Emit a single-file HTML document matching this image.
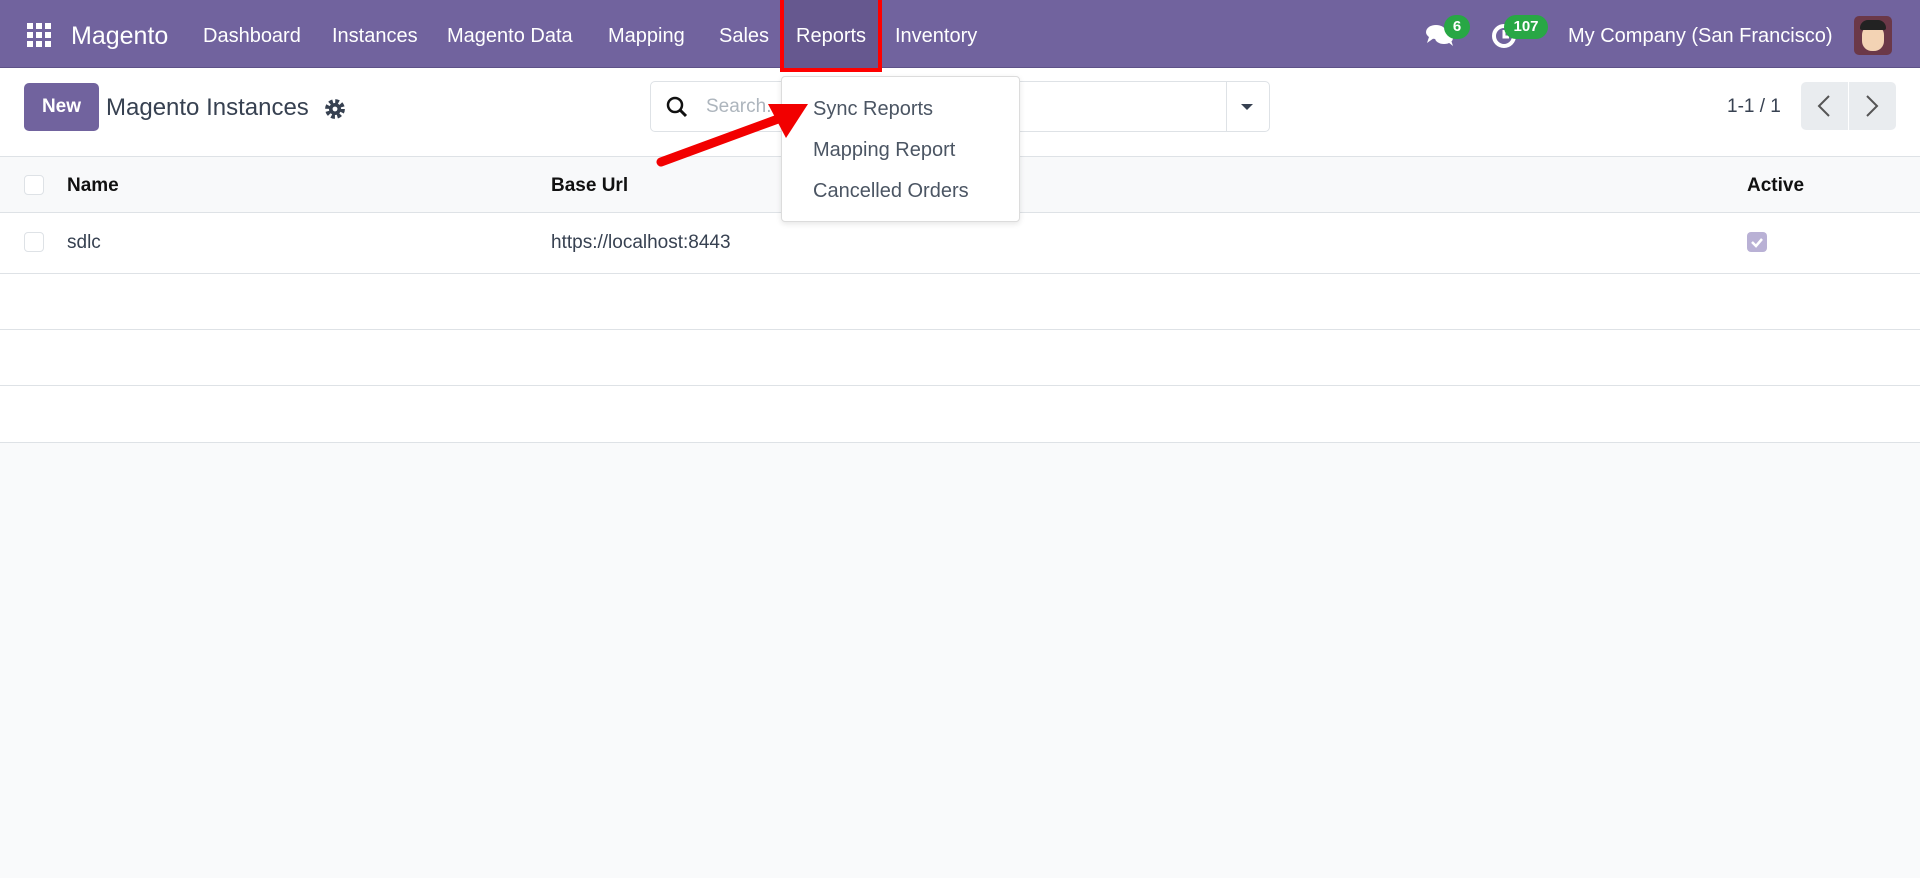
<!DOCTYPE html>
<html><head><meta charset="utf-8"><style>
*{box-sizing:border-box;margin:0;padding:0}
body{width:1920px;height:878px;background:#f9fafb;font-family:"Liberation Sans",sans-serif;position:relative;overflow:hidden;color:#374151}
.nav{position:absolute;left:0;top:0;width:1920px;height:68px;background:#71639e;border-bottom:1px solid #5e5288;z-index:2}
.nav span{position:absolute;top:25px;color:#fff;font-size:20px}
.cp{position:absolute;left:0;top:68px;width:1920px;height:89px;background:#fff;border-bottom:1px solid #dee2e6}
.abs{position:absolute}
.th{position:absolute;left:0;top:157px;width:1920px;height:56px;background:#f8f9fa;border-bottom:1px solid #dee2e6}
.row{position:absolute;left:0;width:1920px;background:#fff;border-bottom:1px solid #dee2e6}
.cb{position:absolute;width:20px;height:20px;border:1px solid #dee2e6;border-radius:4px;background:#fff}
.dd{position:absolute;left:781px;top:76px;width:239px;height:146px;background:#fff;border:1px solid #dcdcdc;border-radius:4px;box-shadow:0 2px 6px rgba(0,0,0,.1);z-index:3}
.dd div{position:absolute;left:31px;font-size:20px;color:#4b5563}
.badge{position:absolute;background:#28a745;color:#fff;font-weight:bold;font-size:15px;border-radius:12px;height:24px;line-height:24px;text-align:center}
</style></head><body>
<div class="nav">
 <svg class="abs" style="left:27px;top:23px" width="24" height="24" viewBox="0 0 24 24" fill="#fff">
  <rect x="0" y="0" width="6" height="6"/><rect x="9" y="0" width="6" height="6"/><rect x="18" y="0" width="6" height="6"/>
  <rect x="0" y="9" width="6" height="6"/><rect x="9" y="9" width="6" height="6"/><rect x="18" y="9" width="6" height="6"/>
  <rect x="0" y="18" width="6" height="6"/><rect x="9" y="18" width="6" height="6"/><rect x="18" y="18" width="6" height="6"/></svg>
 <span style="left:71px;top:22px;font-size:25px">Magento</span>
 <span style="left:203px">Dashboard</span>
 <span style="left:332px">Instances</span>
 <span style="left:447px">Magento Data</span>
 <span style="left:608px">Mapping</span>
 <span style="left:719px">Sales</span>
 <div class="abs" style="left:780px;top:0;width:102px;height:72px;background:#66588f;border:4px solid #ff0000;border-top:none"></div>
 <span style="left:796px">Reports</span>
 <span style="left:895px">Inventory</span>
 <svg class="abs" style="left:1426px;top:23px" width="28" height="24" viewBox="0 0 28 24" fill="#fff"><ellipse cx="10" cy="9" rx="10" ry="7"/><path d="M3 14 L1 20 L8 15Z"/><ellipse cx="18" cy="15" rx="9" ry="6"/><path d="M22 19 L27 23 L25 17Z"/></svg>
 <div class="badge" style="left:1444px;top:15px;width:26px">6</div>
 <svg class="abs" style="left:1491px;top:21px" width="28" height="28" viewBox="0 0 28 28"><circle cx="13" cy="15" r="10" fill="none" stroke="#fff" stroke-width="4"/><path d="M13 9v7h5" stroke="#fff" stroke-width="3" fill="none"/></svg>
 <div class="badge" style="left:1504px;top:15px;width:44px">107</div>
 <span style="left:1568px">My Company (San Francisco)</span>
 <div class="abs" style="left:1854px;top:16px;width:38px;height:39px;border-radius:5px;background:#6b3848"><div class="abs" style="left:8px;top:9px;width:22px;height:26px;border-radius:10px;background:#f3d3b4"></div><div class="abs" style="left:6px;top:4px;width:26px;height:10px;border-radius:8px 8px 2px 2px;background:#222"></div></div>
</div>
<div class="cp">
 <div class="abs" style="left:24px;top:15px;width:75px;height:48px;background:#71639e;border-radius:5px;color:#fff;font-weight:bold;font-size:19px;text-align:center;line-height:48px">New</div>
 <div class="abs" style="left:106px;top:26px;font-size:24px;color:#374151">Magento Instances</div>
 <svg class="abs" style="left:324px;top:30px" width="22" height="22" viewBox="0 0 20 20"><circle cx="10" cy="10" r="7" fill="none" stroke="#374151" stroke-width="4" stroke-dasharray="3.3 2.2"/><circle cx="10" cy="10" r="5.5" fill="#374151"/><circle cx="10" cy="10" r="2.2" fill="#fff"/></svg>
 <div class="abs" style="left:650px;top:13px;width:620px;height:51px;border:1px solid #dee2e6;border-radius:5px;background:#fff">
  <svg class="abs" style="left:15px;top:14px" width="22" height="22" viewBox="0 0 22 22"><circle cx="9" cy="9" r="7" fill="none" stroke="#111" stroke-width="2.5"/><path d="M14 14l6 6" stroke="#111" stroke-width="3"/></svg>
  <div class="abs" style="left:55px;top:14px;font-size:19px;color:#adb5bd">Search...</div>
  <div class="abs" style="left:575px;top:0;width:1px;height:49px;background:#dee2e6"></div>
  <div class="abs" style="left:590px;top:22px;width:0;height:0;border-left:6px solid transparent;border-right:6px solid transparent;border-top:6px solid #374151"></div>
 </div>
 <div class="abs" style="left:1727px;top:28px;font-size:19px;color:#374151">1-1 / 1</div>
 <div class="abs" style="left:1801px;top:14px;width:95px;height:48px;background:#e9ecef;border-radius:5px"><div class="abs" style="left:47px;top:0;width:1px;height:48px;background:#fff"></div>
  <svg class="abs" style="left:16px;top:13px" width="14" height="22" viewBox="0 0 14 22"><path d="M12 1L2 11l10 10" fill="none" stroke="#555" stroke-width="2"/></svg>
  <svg class="abs" style="left:64px;top:13px" width="14" height="22" viewBox="0 0 14 22"><path d="M2 1l10 10L2 21" fill="none" stroke="#555" stroke-width="2"/></svg></div>
</div>
<div class="th">
 <div class="cb" style="left:24px;top:18px"></div>
 <div class="abs" style="left:67px;top:18px;font-weight:bold;font-size:19px;color:#111">Name</div>
 <div class="abs" style="left:551px;top:18px;font-weight:bold;font-size:19px;color:#111">Base Url</div>
 <div class="abs" style="left:1747px;top:18px;font-weight:bold;font-size:19px;color:#111">Active</div>
</div>
<div class="row" style="top:213px;height:61px">
 <div class="cb" style="left:24px;top:19px"></div>
 <div class="abs" style="left:67px;top:19px;font-size:19px">sdlc</div>
 <div class="abs" style="left:551px;top:19px;font-size:19px">https://localhost:8443</div>
 <div class="abs" style="left:1747px;top:19px;width:20px;height:20px;border-radius:4px;background:#b9b1d5"><svg width="20" height="20" viewBox="0 0 20 20"><path d="M5 10l4 4 6-7" fill="none" stroke="#fff" stroke-width="2.5"/></svg></div>
</div>
<div class="row" style="top:274px;height:56px"></div>
<div class="row" style="top:330px;height:56px"></div>
<div class="row" style="top:386px;height:57px"></div>
<div class="dd">
 <div style="top:21px">Sync Reports</div>
 <div style="top:62px">Mapping Report</div>
 <div style="top:103px">Cancelled Orders</div>
</div>
<svg class="abs" style="left:0;top:0;z-index:4" width="1920" height="878"><path d="M661 162 L778 119" stroke="#f20000" stroke-width="9" stroke-linecap="round"/><path d="M808 104 L768 104 L786 138Z" fill="#f20000"/></svg>
</body></html>
